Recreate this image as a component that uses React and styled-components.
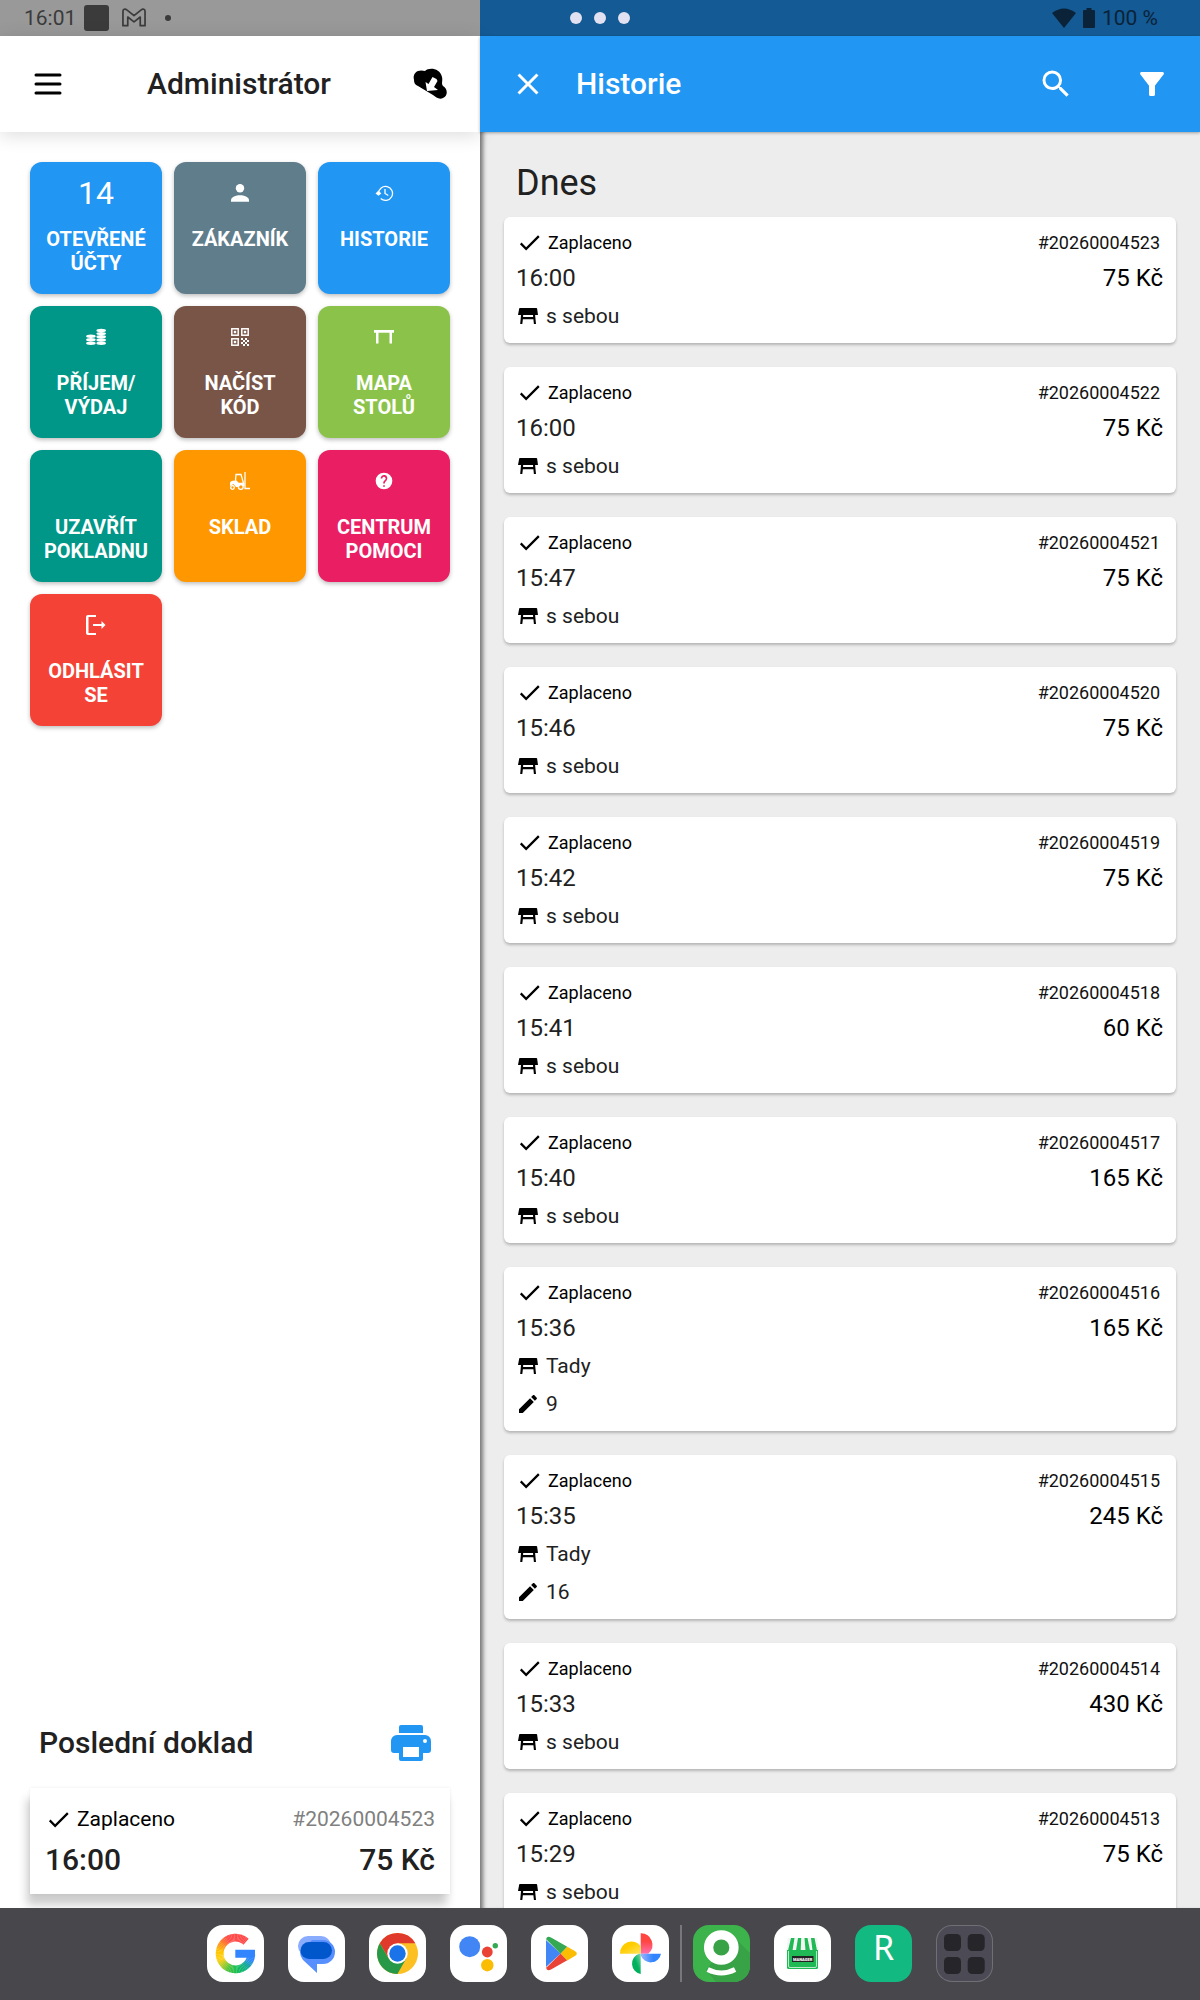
import React from 'react';
import styled, { createGlobalStyle } from 'styled-components';

const GlobalStyle = createGlobalStyle`
  *, *::before, *::after { box-sizing: border-box; }
  body { margin: 0; background: #fff; color: #212121; font-family: Roboto, "Noto Sans", sans-serif; }
  button { font: inherit; color: inherit; border: 0; padding: 0; background: none; cursor: pointer; }
  h1, h2, p, ul { margin: 0; padding: 0; font-weight: inherit; }
  ul { list-style: none; }
  svg { display: block; flex: none; }
`;

/* ---------- layout ---------- */

const Screen = styled.div`
  display: flex;
  flex-direction: column;
  height: 100vh;
  overflow: hidden;
`;

const StatusBar = styled.div`
  flex: none;
  display: grid;
  grid-template-columns: 1fr auto 1fr;
  align-items: center;
  height: 36px;
  padding: 0 42px 0 24px;
  font-size: 21px;
  line-height: 24px;
  color: #3b3b3b;
  background: linear-gradient(90deg, #999 40%, #145a94 40%);
`;

const StatusGroup = styled.div`
  display: flex;
  align-items: center;
  gap: ${(p) => (p.$end ? 7 : 8)}px;
  justify-content: ${(p) => (p.$end ? 'flex-end' : 'flex-start')};
  color: ${(p) => (p.$end ? '#0a2338' : '#3b3b3b')};
`;

const NotificationBlock = styled.span`
  width: 25px;
  height: 26px;
  margin-right: 5px;
  border-radius: 3px;
  background: #3b3b3b;
`;

const Dots = styled.div`
  display: flex;
  gap: 12px;
  padding-left: 18px;
`;

const Dot = styled.span`
  width: 12px;
  height: 12px;
  border-radius: 50%;
  background: #e2e1f1;
`;

const MoreDot = styled(Dot)`
  width: 6px;
  height: 6px;
  margin-left: 11px;
  background: #3b3b3b;
`;

const Panes = styled.div`
  flex: 1;
  min-height: 0;
  display: grid;
  grid-template-columns: 2fr 3fr;
`;

const Pane = styled.section`
  display: flex;
  flex-direction: column;
  min-width: 0;
  min-height: 0;
  background: ${(p) => p.$background};
`;

const AppBar = styled.header`
  flex: none;
  z-index: 1;
  display: flex;
  align-items: center;
  gap: ${(p) => (p.$primary ? 60 : 30)}px;
  height: 96px;
  padding: 0 ${(p) => (p.$primary ? 30 : 32)}px 0 30px;
  color: ${(p) => (p.$primary ? '#fff' : '#000')};
  background: ${(p) => (p.$primary ? '#2196f3' : '#fff')};
  box-shadow: ${(p) => (p.$primary ? '0 1px 3px rgba(0,0,0,.3)' : '0 3px 18px rgba(0,0,0,.14)')};
`;

const BarTitle = styled.h1`
  flex: 1;
  font-size: 30px;
  line-height: 36px;
  font-weight: 500;
  text-align: ${(p) => (p.$center ? 'center' : 'left')};
  color: ${(p) => (p.$center ? '#212121' : '#fff')};
  margin-left: ${(p) => (p.$center ? 0 : -30)}px;
`;

/* ---------- left pane ---------- */

const Tiles = styled.nav`
  display: grid;
  grid-template-columns: repeat(3, 1fr);
  gap: 12px;
  padding: 30px;
`;

const Tile = styled.button`
  display: flex;
  flex-direction: column;
  align-items: center;
  aspect-ratio: 1;
  padding: 11px 6px;
  border-radius: 12px;
  color: #fff;
  background: ${(p) => p.$color};
  box-shadow: 0 2px 4px rgba(0, 0, 0, 0.25);
`;

const TileTop = styled.span`
  display: flex;
  align-items: center;
  justify-content: center;
  height: 40px;
  margin-bottom: 14px;
  font-size: 32px;
`;

const TileLabel = styled.span`
  font-size: 20px;
  line-height: 24px;
  font-weight: 700;
  text-align: center;
  white-space: pre-line;
`;

const LastReceipt = styled.div`
  margin-top: auto;
  padding: 0 30px 14px;
`;

const LastHeader = styled.div`
  display: flex;
  align-items: center;
  justify-content: space-between;
  padding: 0 15px 21px 9px;
  color: #2196f3;
`;

const LastTitle = styled.h2`
  font-size: 30px;
  line-height: 36px;
  font-weight: 500;
  color: #212121;
`;

const ReceiptCard = styled.article`
  padding: 13px 15px;
  background: #fff;
  box-shadow: -3px 11px 9px rgba(0, 0, 0, 0.2), 0 0 3px rgba(0, 0, 0, 0.08);
`;

const Row = styled.div`
  display: flex;
  align-items: center;
  justify-content: space-between;
  height: ${(p) => p.$height}px;
`;

const Status = styled.span`
  display: flex;
  align-items: center;
  gap: 5px;
  font-size: ${(p) => (p.$large ? 21 : 18)}px;
  color: #000;
`;

const ReceiptNumber = styled.span`
  font-size: ${(p) => (p.$large ? 21 : 18)}px;
  color: ${(p) => (p.$large ? '#808080' : '#111')};
  padding-right: ${(p) => (p.$large ? 0 : 3)}px;
`;

const ReceiptValue = styled.span`
  font-size: 30px;
  font-weight: 500;
`;

/* ---------- history pane ---------- */

const History = styled.div`
  flex: 1;
  min-height: 0;
  overflow: hidden;
  padding: 24px 24px 0;
  box-shadow: inset 6px 0 4px -3px rgba(0, 0, 0, 0.5);
`;

const DayTitle = styled.h2`
  padding: 6px 12px 13px;
  font-size: 36px;
  line-height: 42px;
`;

const HistoryList = styled.ul`
  display: flex;
  flex-direction: column;
  gap: 24px;
`;

const HistoryCard = styled.li`
  padding: 8px 13px 8px 12px;
  border-radius: 6px;
  background: #fff;
  box-shadow: 0 2px 3px rgba(0, 0, 0, 0.24);
`;

const Time = styled.time`
  font-size: 24px;
`;

const Price = styled.span`
  font-size: 24px;
  color: #000;
`;

const Detail = styled.p`
  display: flex;
  align-items: center;
  gap: 6px;
  height: 38px;
  font-size: 21px;
  svg { color: #000; }
`;

/* ---------- dock ---------- */

const Dock = styled.nav`
  flex: none;
  display: flex;
  align-items: center;
  justify-content: center;
  height: 92px;
  padding-bottom: 2px;
  background: #48474b;
`;

const DockGroup = styled.div`
  display: flex;
  gap: 24px;
  & + & {
    margin-left: 11px;
    padding-left: 11px;
    border-left: 2px solid #78777b;
  }
`;

const DockButton = styled.button`
  display: flex;
  justify-content: center;
  width: 57px;
  height: 57px;
  overflow: hidden;
  border-radius: 16px;
  background: ${(p) => p.$color || '#fff'};
  color: #fff;
  font-family: "Noto Sans", Roboto, sans-serif;
  font-size: 34px;
  line-height: 44px;
  box-shadow: ${(p) => (p.$outlined ? 'inset 0 0 0 1px #706f76' : 'none')};
`;

/* ---------- icons ---------- */

const Icon = ({ size = 24, box = 24, children, ...rest }) => (
  <svg width={size} height={size} viewBox={`0 0 ${box} ${box}`} fill="currentColor" aria-hidden="true" {...rest}>
    {children}
  </svg>
);

const MenuIcon = () => (
  <Icon size={36}><path d="M4 6H20M4 12H20M4 18H20" stroke="currentColor" strokeWidth="2" strokeLinecap="round" /></Icon>
);
const CloseIcon = () => (
  <Icon size={36}><path d="M19 6.41 17.59 5 12 10.59 6.41 5 5 6.41 10.59 12 5 17.59 6.41 19 12 13.41 17.59 19 19 17.59 13.41 12z" /></Icon>
);
const SearchIcon = () => (
  <Icon size={36}><path d="M15.5 14h-.79l-.28-.27A6.47 6.47 0 0 0 16 9.5 6.5 6.5 0 1 0 9.5 16c1.61 0 3.09-.59 4.23-1.57l.27.28v.79l5 4.99L20.49 19l-4.99-5zm-6 0C7.01 14 5 11.99 5 9.5S7.01 5 9.5 5 14 7.01 14 9.5 11.99 14 9.5 14z" /></Icon>
);
const FilterIcon = () => (
  <Icon size={36}><path d="M4.25 5.61C6.27 8.2 10 13 10 13v6c0 .55.45 1 1 1h2c.55 0 1-.45 1-1v-6s3.72-4.8 5.74-7.39A1 1 0 0 0 18.95 4H5.04c-.83 0-1.3.95-.79 1.61z" /></Icon>
);
const CheckIcon = () => (
  <Icon size={27}><path d="M21 7 9 19l-5.5-5.5 1.41-1.41L9 16.17 19.59 5.59z" /></Icon>
);
const PencilIcon = () => (
  <Icon><path d="M20.71 7.04c.39-.39.39-1.04 0-1.41l-2.34-2.34c-.37-.39-1.02-.39-1.41 0l-1.84 1.83 3.75 3.75M3 17.25V21h3.75L17.81 9.93l-3.75-3.75z" /></Icon>
);
const TableIcon = () => (
  <Icon><path d="M4 4h16.4a.7.7 0 0 1 .7.6L22 11H2l1.200-6.400A.7.7 0 0 1 4 4zM5 11h2.200l-.15 2h10.100l-.15-2h2.100l.9 9h-2.100l-.5-4.700H6.900L6.300 20H4.200z" /></Icon>
);
const CloudIcon = () => (
  <Icon size={36} box={36}>
    <path d="M2 14C0 6 7 3 13 5c4-4 15-3 17 6 1 4-1 6 1 9 5 3 5 10 0 12-4 2-7-1-10-3L6 20c-3-1-4-3-4-6z" />
    <path d="M15 25 26 24l-4-3 3.500-6-1-2-4-2-4 7-3-2z" fill="#fff" />
  </Icon>
);
const PrintIcon = () => (
  <Icon size={48}>
    <path d="M7 3h10a1 1 0 0 1 1 1v3H6V4a1 1 0 0 1 1-1zM5 8h14a3 3 0 0 1 3 3v4.500a1.500 1.500 0 0 1-1.500 1.500H18v3a1 1 0 0 1-1 1H7a1 1 0 0 1-1-1v-3H3.500A1.500 1.500 0 0 1 2 15.500V11a3 3 0 0 1 3-3z" />
    <path d="M8 14h8v5H8z" fill="#fff" />
    <circle cx="19" cy="11" r="1" fill="#fff" />
  </Icon>
);

const PersonIcon = () => (
  <Icon size={20} box={20}><circle cx="10" cy="5.200" r="4.200" /><path d="M1 18.700v-1.500c0-3.500 5-5 9-5s9 1.500 9 5v1.500z" /></Icon>
);
const HistoryIcon = () => (
  <Icon size={20} box={20} fill="none" stroke="currentColor" strokeWidth="1.300">
    <path d="M4.500 10.500a7 7 0 1 1 2.200 5M11 6v4.500l3.300 2" />
    <path d="m1.500 10.500 3-3 2.800 3-2.800 2.200z" fill="currentColor" stroke="none" />
  </Icon>
);
const CoinsIcon = () => (
  <Icon size={20} box={20}>
    {[9.2, 12.7, 16.2].map((y) => <ellipse key={y} cx="4.900" cy={y} rx="4.800" ry="1.700" />)}
    {[3.4, 6.600, 9.8, 13, 16.2].map((y) => <ellipse key={y} cx="15.200" cy={y} rx="4.800" ry="1.700" />)}
  </Icon>
);
const QrIcon = () => (
  <Icon size={20} box={20}>
    {[[1, 1], [11, 1], [1, 11]].map(([x, y]) => (
      <g key={`${x}-${y}`}>
        <rect x={x + 0.8} y={y + 0.8} width="6.400" height="6.400" fill="none" stroke="currentColor" strokeWidth="1.500" />
        <rect x={x + 2.8} y={y + 2.8} width="2.400" height="2.400" />
      </g>
    ))}
    <path d="M11 11h2v2h-2zM15 11h2v2h-2zM13 13h2v2h-2zM17 13h2v2h-2zM11 15h2v2h-2zM15 15h2v2h-2zM13 17h2v2h-2zM17 17h2v2h-2z" />
  </Icon>
);
const DeskIcon = () => (
  <Icon size={20} box={20}><path d="M0 3h20v2.800h-2V16.500h-2.500V5.800h-11V16.500H2V5.800H0z" /></Icon>
);
const ForkliftIcon = () => (
  <Icon size={20} box={20} fill="none" stroke="currentColor" strokeWidth="1.300">
    <path d="M15 1v16.500h5M5.500 9.500 6 3.500h5l2.500 8.500V15M5.500 9.500l3 3H13" />
    <path d="M0 15v-3.500Q1 9.500 5 9.500l3.500 3H13V15l-2-1.500L8.500 16 6 16l-2.500-3z" fill="currentColor" stroke="none" />
    <circle cx="2.500" cy="16.500" r="1.800" /><circle cx="10.800" cy="15.900" r="2.400" />
  </Icon>
);
const HelpIcon = () => (
  <Icon size={20}><path d="M12 2a10 10 0 1 0 0 20 10 10 0 0 0 0-20zm1 17h-2v-2h2zm2.070-7.750-.9.920C13.450 12.900 13 13.500 13 15h-2v-.5c0-1.100.45-2.100 1.170-2.830l1.240-1.260A2 2 0 1 0 10 9H8a4 4 0 1 1 7.070 2.250z" /></Icon>
);
const LogoutIcon = () => (
  <Icon size={20} box={20}><path d="M10 0v2H2.500v16H10v2H2a2 2 0 0 1-2-2V2a2 2 0 0 1 2-2zM7 9h8.500V6l4 4-4 4v-3H7z" /></Icon>
);

const MailIcon = () => (
  <svg width="24" height="20" viewBox="0 0 25 20" fill="none" stroke="currentColor" strokeWidth="1.800" strokeLinejoin="round" aria-hidden="true">
    <path d="M1 18V3c0-2 2-3 4-1.500l7.500 6 7.500-6C22 0 24 1 24 3v15h-5V9l-6.500 5L6 9v9z" />
  </svg>
);
const WifiIcon = () => (
  <svg width="24" height="20" viewBox="0 0 24 20" fill="currentColor" aria-hidden="true"><path d="M0 5Q12-4 24 5L12 20z" /></svg>
);
const BatteryIcon = () => (
  <svg width="12" height="20" viewBox="0 0 12 20" fill="currentColor" aria-hidden="true"><path d="M3.500 0h5v2H11a1 1 0 0 1 1 1v16a1 1 0 0 1-1 1H1a1 1 0 0 1-1-1V3a1 1 0 0 1 1-1h2.500z" /></svg>
);

/* ---------- dock artwork ---------- */

const Art = ({ children }) => <Icon size={57} box={57}>{children}</Icon>;

const ringStops = [
  [45, [255, 75, 75]], [115, [255, 75, 72]], [170, [255, 200, 0]], [200, [255, 208, 20]],
  [245, [70, 196, 60]], [280, [14, 188, 95]], [310, [20, 170, 150]], [335, [49, 134, 255]], [361, [49, 134, 255]],
];
const ringColor = (angle) => {
  const i = ringStops.findIndex(([a]) => a > angle);
  const [a0, c0] = ringStops[i - 1];
  const [a1, c1] = ringStops[i];
  const t = (angle - a0) / (a1 - a0);
  return `rgb(${c0.map((v, k) => Math.round(v + (c1[k] - v) * t)).join(',')})`;
};
const ringPoint = (deg, r) => {
  const a = (deg * Math.PI) / 180;
  return `${28.5 + r * Math.cos(a)} ${28.5 - r * Math.sin(a)}`;
};

const GoogleArt = () => (
  <Art>
    {Array.from({ length: 62 }, (_, i) => 48 + i * 5).map((a) => (
      <path key={a} d={`M${ringPoint(a, 15.8)}A15.800 15.800 0 0 0 ${ringPoint(Math.min(a + 5.6, 358), 15.8)}`} fill="none" stroke={ringColor(a)} strokeWidth="7.800" />
    ))}
    <path d="M28.300 24.700H48v4l-1 4H28.300z" fill="#3186ff" />
  </Art>
);
const MessagesArt = () => (
  <Art>
    <rect x="10" y="11" width="33" height="20" rx="10" fill="#89acff" />
    <path d="M24 15h11a12 12 0 0 1 0 24h-6v9L15 35a12 12 0 0 1-3-8z" fill="#588fff" />
    <rect x="12.500" y="17" width="31.500" height="17" rx="8.500" fill="#0057cc" />
  </Art>
);
const ChromeArt = () => (
  <Art>
    <g transform="translate(28.5 28.5)">
      <circle r="20.500" fill="#fdc023" />
      <path d="M17.900-10.200H0V0L-8.800 5.100-17.700-10.300A20.500 20.500 0 0 1 17.900-10.200z" fill="#e03a2c" />
      <path d="M-17.700-10.300-8.800 5.100 0 0 8.800 5.100-.1 20.500A20.500 20.500 0 0 1-17.700-10.300z" fill="#279847" />
      <circle r="10.200" fill="#fff" /><circle r="8.200" fill="#1a73e8" />
    </g>
  </Art>
);
const AssistantArt = () => (
  <Art>
    <circle cx="19.700" cy="21.700" r="10.500" fill="#4285f4" />
    <circle cx="37.300" cy="27" r="5.400" fill="#ea4335" />
    <circle cx="45.300" cy="20.700" r="2.700" fill="#34a853" />
    <circle cx="37.300" cy="40.200" r="6.200" fill="#fbbc04" />
  </Art>
);
const PlayArt = () => (
  <Art>
    <path d="M15 15v27l14.700-13.500z" fill="#4285f4" />
    <path d="M15 16c0-4 2-5 5-3.500l16.300 9.200-6.600 7L15 14z" fill="#34a853" />
    <path d="M15 41c0 4 2 5 5 3.500l16.300-9.200-6.600-6.800L15 43z" fill="#ea4335" />
    <path d="m36.300 21.700 7.500 4.200q4 2.600 0 5.200l-7.500 4.300-6.600-6.900z" fill="#fbbc04" />
  </Art>
);
const PhotosArt = () => (
  <Art>
    <defs>
      <linearGradient id="petalRed" x1="0" y1="0" x2="0" y2="1"><stop offset=".4" stopColor="#ff4641" /><stop offset="1" stopColor="#ff70b0" /></linearGradient>
      <linearGradient id="petalYellow" x1="0" y1="0" x2="1" y2="1"><stop offset=".4" stopColor="#ffcc00" /><stop offset="1" stopColor="#ffe45c" /></linearGradient>
      <linearGradient id="petalBlue" x1="0" y1="0" x2="1" y2="0"><stop offset="0" stopColor="#a0b4ff" /><stop offset=".6" stopColor="#3186ff" /></linearGradient>
      <linearGradient id="petalGreen" x1="0" y1="1" x2="1" y2="0"><stop offset=".5" stopColor="#00b05c" /><stop offset="1" stopColor="#80d8b0" /></linearGradient>
    </defs>
    <path d="M28.700 8.300v20.400h7.500A11.500 11.500 0 0 0 28.700 8.300z" fill="url(#petalRed)" />
    <path d="M8 28.700h20.700v-7.500A11.500 11.500 0 0 0 8 28.700z" fill="url(#petalYellow)" />
    <path d="M49 28.700H28.700v1.500A10.500 10.500 0 0 0 49 28.700z" fill="url(#petalBlue)" />
    <path d="M28.700 49V28.700h-1.500A10.500 10.500 0 0 0 28.700 49z" fill="url(#petalGreen)" />
  </Art>
);
const CashierArt = () => (
  <Art>
    <path d="M40 11 57 28v29H23L13 45z" fill="#37a246" />
    <circle cx="28.300" cy="22.500" r="12.700" fill="#37a246" stroke="#fff" strokeWidth="9.300" />
    <path d="M14.700 44.500q13.700 7 27.400 0" fill="none" stroke="#fff" strokeWidth="5" />
  </Art>
);
const ManagerArt = () => (
  <Art>
    <rect x="13" y="23" width="31" height="21" rx="1.500" fill="#1fb955" />
    <path d="M14.500 26v15q0 1.500 1.500 1.500h25q1.500 0 1.500-1.500V26" fill="none" stroke="#fff" strokeWidth=".7" />
    <path d="M14 13h29l1.500 12H12.500z" fill="#f4f4f4" />
    <path d="M17 13h3.500l-2 12.500h-4.500zM24 13h3.200l-.5 12.500h-4.700zM30.500 13h3l2.500 12.500h-4.500zM37 13h3.500l2.500 12.500h-4.500z" fill="#1fb955" />
    <rect x="18" y="31" width="21.500" height="6" fill="#222" />
    <text x="28.700" y="35.500" textAnchor="middle" fontFamily="Roboto, sans-serif" fontWeight="900" fontSize="4" fill="#fff">MANAGER</text>
  </Art>
);
const AppsArt = () => (
  <Art>
    {[[8, 9], [31.7, 9], [8, 32], [31.7, 32]].map(([x, y]) => (
      <rect key={`${x}-${y}`} x={x} y={y} width="17" height="17" rx="4.500" fill="#25252a" />
    ))}
  </Art>
);

/* ---------- data ---------- */

const tiles = [
  { label: 'OTEVŘENÉ\nÚČTY', color: '#2196f3', top: '14' },
  { label: 'ZÁKAZNÍK', color: '#607d8b', top: <PersonIcon /> },
  { label: 'HISTORIE', color: '#2196f3', top: <HistoryIcon /> },
  { label: 'PŘÍJEM/\nVÝDAJ', color: '#009688', top: <CoinsIcon /> },
  { label: 'NAČÍST\nKÓD', color: '#795548', top: <QrIcon /> },
  { label: 'MAPA\nSTOLŮ', color: '#8bc34a', top: <DeskIcon /> },
  { label: 'UZAVŘÍT\nPOKLADNU', color: '#009688', top: null },
  { label: 'SKLAD', color: '#ff9800', top: <ForkliftIcon /> },
  { label: 'CENTRUM\nPOMOCI', color: '#e91e63', top: <HelpIcon /> },
  { label: 'ODHLÁSIT\nSE', color: '#f44336', top: <LogoutIcon /> },
];

const receipts = [
  { id: '20260004523', time: '16:00', price: '75 Kč', place: 's sebou' },
  { id: '20260004522', time: '16:00', price: '75 Kč', place: 's sebou' },
  { id: '20260004521', time: '15:47', price: '75 Kč', place: 's sebou' },
  { id: '20260004520', time: '15:46', price: '75 Kč', place: 's sebou' },
  { id: '20260004519', time: '15:42', price: '75 Kč', place: 's sebou' },
  { id: '20260004518', time: '15:41', price: '60 Kč', place: 's sebou' },
  { id: '20260004517', time: '15:40', price: '165 Kč', place: 's sebou' },
  { id: '20260004516', time: '15:36', price: '165 Kč', place: 'Tady', note: '9' },
  { id: '20260004515', time: '15:35', price: '245 Kč', place: 'Tady', note: '16' },
  { id: '20260004514', time: '15:33', price: '430 Kč', place: 's sebou' },
  { id: '20260004513', time: '15:29', price: '75 Kč', place: 's sebou' },
];

export default function App() {
  const last = receipts[0];
  return (
    <Screen>
      <GlobalStyle />
      <StatusBar>
        <StatusGroup>
          <span>16:01</span>
          <NotificationBlock />
          <MailIcon />
          <MoreDot />
        </StatusGroup>
        <Dots>
          <Dot />
          <Dot />
          <Dot />
        </Dots>
        <StatusGroup $end>
          <WifiIcon />
          <BatteryIcon />
          <span>100 %</span>
        </StatusGroup>
      </StatusBar>

      <Panes>
        <Pane $background="#fff">
          <AppBar>
            <button type="button" aria-label="Menu"><MenuIcon /></button>
            <BarTitle $center>Administrátor</BarTitle>
            <button type="button" aria-label="Synchronizace"><CloudIcon /></button>
          </AppBar>
          <Tiles>
            {tiles.map((t) => (
              <Tile key={t.label} type="button" $color={t.color}>
                <TileTop>{t.top}</TileTop>
                <TileLabel>{t.label}</TileLabel>
              </Tile>
            ))}
          </Tiles>
          <LastReceipt>
            <LastHeader>
              <LastTitle>Poslední doklad</LastTitle>
              <button type="button" aria-label="Tisk"><PrintIcon /></button>
            </LastHeader>
            <ReceiptCard>
              <Row $height={36}>
                <Status $large><CheckIcon />Zaplaceno</Status>
                <ReceiptNumber $large>#{last.id}</ReceiptNumber>
              </Row>
              <Row $height={44}>
                <ReceiptValue>{last.time}</ReceiptValue>
                <ReceiptValue>{last.price}</ReceiptValue>
              </Row>
            </ReceiptCard>
          </LastReceipt>
        </Pane>

        <Pane $background="#ededed">
          <AppBar $primary>
            <button type="button" aria-label="Zavřít"><CloseIcon /></button>
            <BarTitle>Historie</BarTitle>
            <button type="button" aria-label="Hledat"><SearchIcon /></button>
            <button type="button" aria-label="Filtr"><FilterIcon /></button>
          </AppBar>
          <History>
            <DayTitle>Dnes</DayTitle>
            <HistoryList>
              {receipts.map((r) => (
                <HistoryCard key={r.id}>
                  <Row $height={34}>
                    <Status><CheckIcon />Zaplaceno</Status>
                    <ReceiptNumber>#{r.id}</ReceiptNumber>
                  </Row>
                  <Row $height={38}>
                    <Time>{r.time}</Time>
                    <Price>{r.price}</Price>
                  </Row>
                  <Detail><TableIcon />{r.place}</Detail>
                  {r.note && <Detail><PencilIcon />{r.note}</Detail>}
                </HistoryCard>
              ))}
            </HistoryList>
          </History>
        </Pane>
      </Panes>

      <Dock>
        <DockGroup>
          <DockButton type="button" aria-label="Google"><GoogleArt /></DockButton>
          <DockButton type="button" aria-label="Zprávy"><MessagesArt /></DockButton>
          <DockButton type="button" aria-label="Chrome"><ChromeArt /></DockButton>
          <DockButton type="button" aria-label="Asistent"><AssistantArt /></DockButton>
          <DockButton type="button" aria-label="Play"><PlayArt /></DockButton>
          <DockButton type="button" aria-label="Fotky"><PhotosArt /></DockButton>
        </DockGroup>
        <DockGroup>
          <DockButton type="button" aria-label="Pokladna" $color="#3db34c"><CashierArt /></DockButton>
          <DockButton type="button" aria-label="Manager"><ManagerArt /></DockButton>
          <DockButton type="button" $color="#12b981">R</DockButton>
          <DockButton type="button" aria-label="Aplikace" $color="#4b4a55" $outlined><AppsArt /></DockButton>
        </DockGroup>
      </Dock>
    </Screen>
  );
}
